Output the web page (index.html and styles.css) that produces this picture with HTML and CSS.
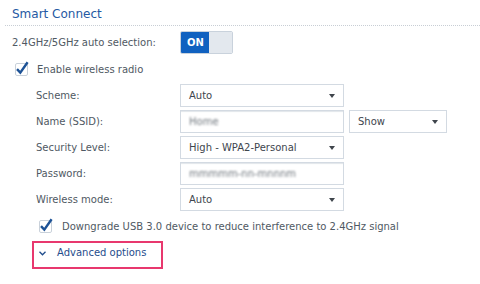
FILE: index.html
```html
<!DOCTYPE html>
<html lang="en">
<head>
    <meta charset="UTF-8">
    <meta name="viewport" content="width=device-width, initial-scale=1.0">
    <link rel="stylesheet" href="styles.css">
    <title>Smart Connect</title>
</head>
<body>
    <div class="panel">
        <h2 class="titulo">Smart Connect</h2>
        <div class="fila">
            <span class="etiqueta">2.4GHz/5GHz auto selection:</span>
            <div class="toggle"><span class="on">ON</span><span class="off"></span></div>
        </div>
        <div class="fila check-fila">
            <span class="check">
                <svg width="14" height="16" viewBox="0 0 14 16"><rect x="0.5" y="3.5" width="12" height="12" rx="1.5" fill="#fff" stroke="#c9d1da"/><path d="M2 9.2 L5.3 12.6 L12.6 2.2" fill="none" stroke="#1d5296" stroke-width="2.4" stroke-linejoin="miter"/></svg>
            </span>
            <span>Enable wireless radio</span>
        </div>
        <div class="campos">
            <div class="fila">
                <span class="etiqueta">Scheme:</span>
                <div class="select"><span>Auto</span><i class="flecha"></i></div>
            </div>
            <div class="fila">
                <span class="etiqueta">Name (SSID):</span>
                <div class="input"><span class="borroso">Home</span></div>
                <div class="select corto"><span>Show</span><i class="flecha"></i></div>
            </div>
            <div class="fila">
                <span class="etiqueta">Security Level:</span>
                <div class="select"><span>High - WPA2-Personal</span><i class="flecha"></i></div>
            </div>
            <div class="fila">
                <span class="etiqueta">Password:</span>
                <div class="input"><span class="borroso">mmmmm-nn-mnnnm</span></div>
            </div>
            <div class="fila">
                <span class="etiqueta">Wireless mode:</span>
                <div class="select"><span>Auto</span><i class="flecha"></i></div>
            </div>
            <div class="fila check-fila usb">
                <span class="check">
                    <svg width="14" height="16" viewBox="0 0 14 16"><rect x="0.5" y="3.5" width="12" height="12" rx="1.5" fill="#fff" stroke="#c9d1da"/><path d="M2 9.2 L5.3 12.6 L12.6 2.2" fill="none" stroke="#1d5296" stroke-width="2.4" stroke-linejoin="miter"/></svg>
                </span>
                <span>Downgrade USB 3.0 device to reduce interference to 2.4GHz signal</span>
            </div>
        </div>
        <div class="avanzado">
            <svg width="7" height="5" viewBox="0 0 7 5"><path d="M0.5 0.8 L3.5 3.8 L6.5 0.8" fill="none" stroke="#1f4c8c" stroke-width="1.3"/></svg>
            <span>Advanced options</span>
        </div>
    </div>
</body>
</html>
```

FILE: styles.css
```css
*{
    margin: 0;
    padding: 0;
    box-sizing: border-box;
}
body{
    background-color: #fff;
    font-family: "DejaVu Sans", Verdana, sans-serif;
    font-size: 10px;
    color: #4f5963;
}
.panel{
    padding-left: 5px;
}
.titulo{
    font-size: 12px;
    font-weight: normal;
    line-height: 14px;
    color: #2559a3;
    padding: 7px 7px 4px;
    border-bottom: 1px dotted #c8ced5;
}
.fila{
    display: flex;
    align-items: center;
    height: 23px;
    margin-top: 3px;
}
.panel > .fila:first-of-type{
    margin-top: 5px;
    padding-left: 7px;
}
.etiqueta{
    width: 168px;
}
.campos .etiqueta{
    width: 144px;
}
.check-fila{
    height: 24px;
    padding-left: 10px;
    gap: 8px;
}
.check{
    display: flex;
    margin-top: -2px;
}
.campos{
    padding-left: 31px;
}
.campos .fila:first-child{
    margin-top: 3px;
}
.usb{
    padding-left: 3px;
    gap: 9px;
    margin-top: 3px;
}
.toggle{
    display: flex;
    width: 53px;
    height: 23px;
    border: 1px solid #c9d2dc;
    border-radius: 2px;
    overflow: hidden;
}
.toggle .on{
    width: 28px;
    background-color: #1061c0;
    color: #fff;
    font-weight: bold;
    font-size: 10px;
    line-height: 21px;
    padding-left: 6px;
}
.toggle .off{
    flex: 1;
    background-color: #e3e8ee;
}
.select, .input{
    display: flex;
    align-items: center;
    justify-content: space-between;
    width: 164px;
    height: 23px;
    border: 1px solid #d3dae2;
    background-color: #fff;
    padding: 0 8px 0 8px;
    color: #3e464e;
}
.input{
    box-shadow: inset 0 2px 1px -1px #e2e6ea;
}
.select.corto{
    width: 98px;
    margin-left: 5px;
}
.flecha{
    width: 0;
    height: 0;
    border-left: 3.5px solid transparent;
    border-right: 3.5px solid transparent;
    border-top: 4px solid #3f454c;
}
.borroso{
    color: #6f767d;
    filter: blur(1.3px);
}
.avanzado{
    display: flex;
    align-items: center;
    gap: 11px;
    width: 131px;
    height: 28px;
    margin: 3px 0 0 27px;
    border: 2px solid #e8386e;
    padding: 0 0 5px 5px;
    color: #1f4c8c;
    font-size: 10px;
}
.avanzado svg{
    margin-top: 1px;
}
```
